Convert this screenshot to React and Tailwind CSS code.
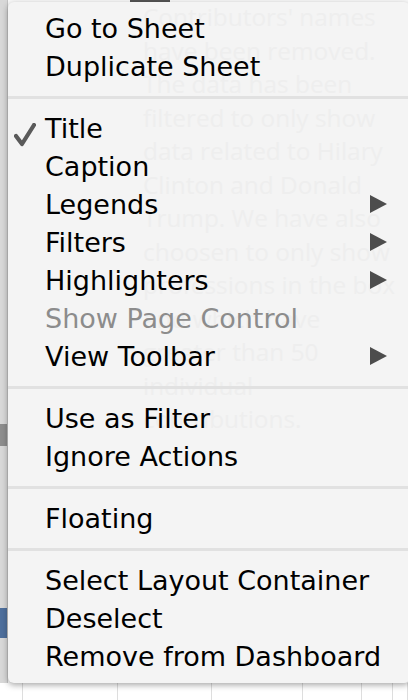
import React from "react";

const bgLines = [
  "Contributors' names",
  "have been removed.",
  "The data has been",
  "filtered to only show",
  "data related to Hilary",
  "Clinton and Donald",
  "Trump. We have also",
  "choosen to only show",
  "professions in the box",
  "and which have",
  "greater than 50",
  "individual",
  "contributions.",
];

const gridCols = [23, 95, 94, 91, 59, 31, 15];

function Arrow() {
  return (
    <svg width="17" height="18" viewBox="0 0 17 18" className="shrink-0">
      <path d="M0 0 L17 9 L0 18 Z" fill="#4d4d4d" />
    </svg>
  );
}

function Check() {
  return (
    <svg width="22" height="24" viewBox="0 0 22 24" className="absolute left-[-31px] top-[8px]">
      <path d="M2 13 L8 21 L20 2" fill="none" stroke="#5a5a5a" strokeWidth="4.2" strokeLinecap="round" strokeLinejoin="round" />
    </svg>
  );
}

function Item({ label, arrow, checked, disabled }) {
  return (
    <div className="h-[38px] flex items-center pl-[37px] pr-[23px]">
      <div className={"relative flex-1 " + (disabled ? "text-[#8c8c8c]" : "text-black")}>
        {checked && <Check />}
        {label}
      </div>
      {arrow && <Arrow />}
    </div>
  );
}

function Sep() {
  return (
    <div className="h-[24px] flex items-center">
      <div className="h-[3px] w-full bg-[#e1e1e1]" />
    </div>
  );
}

export default function App() {
  return (
    <div className="relative w-[408px] h-[700px] overflow-hidden bg-[#fafafa] flex flex-col" style={{ fontFamily: '"DejaVu Sans", sans-serif' }}>
      {/* background app */}
      <div className="h-[683px] flex">
        <div className="w-[8px] flex flex-col bg-[#d8d8d8] border-r border-[#c4c4c4]">
          <div className="h-[424px]" />
          <div className="h-[22px] bg-[#8d8d8d]" />
          <div className="h-[162px]" />
          <div className="h-[30px] bg-[#4e6f9c]" />
        </div>
        <div className="flex-1 flex flex-col">
          <div className="flex">
            <div className="w-[122px]" />
            <div className="w-[40px] h-[3px] bg-[#555]" />
          </div>
        </div>
      </div>
      <div className="h-[17px] flex bg-white">
        {gridCols.map((w, i) => (
          <div key={i} className="border-r border-[#dedede]" style={{ width: w }} />
        ))}
      </div>

      {/* menu overlay */}
      <div className="absolute left-[8px] top-[2px] w-[402px] h-[681px] rounded-[6px] bg-[#f4f4f4] shadow-[0_2px_6px_rgba(0,0,0,0.35)] overflow-hidden">
        {/* faint see-through text of the panel behind */}
        <div className="absolute left-[135px] top-[-2px] text-[24.4px] leading-[33.5px] text-[#eeeeee] whitespace-nowrap" style={{ fontFamily: '"Open Sans", sans-serif' }}>
          {bgLines.map((l) => (
            <div key={l}>{l}</div>
          ))}
        </div>
        <div className="relative pt-[7px] text-[27px] leading-none">
          <Item label="Go to Sheet" />
          <Item label="Duplicate Sheet" />
          <Sep />
          <Item label="Title" checked />
          <Item label="Caption" />
          <Item label="Legends" arrow />
          <Item label="Filters" arrow />
          <Item label="Highlighters" arrow />
          <Item label="Show Page Control" disabled />
          <Item label="View Toolbar" arrow />
          <Sep />
          <Item label="Use as Filter" />
          <Item label="Ignore Actions" />
          <Sep />
          <Item label="Floating" />
          <Sep />
          <Item label="Select Layout Container" />
          <Item label="Deselect" />
          <Item label="Remove from Dashboard" />
        </div>
      </div>
    </div>
  );
}
